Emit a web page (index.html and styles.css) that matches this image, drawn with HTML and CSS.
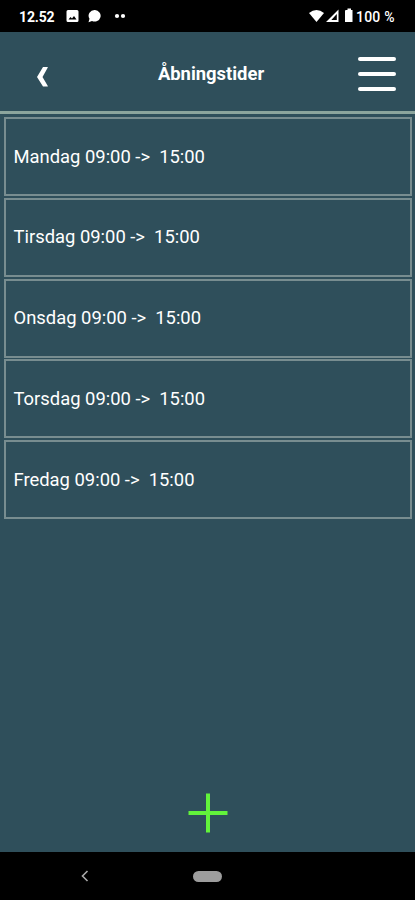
FILE: index.html
```html
<!DOCTYPE html>
<html lang="da">
<head>
<meta charset="utf-8">
<title>Åbningstider</title>
<link rel="stylesheet" href="styles.css">
</head>
<body>
<div class="status">
  <span class="clock">12.52</span>
  <svg class="status-left" width="64" height="16" viewBox="0 0 64 16">
    <path fill="#fff" fill-rule="evenodd" d="M2 2h9q1.500 0 1.500 1.500v9q0 1.500-1.500 1.500h-9q-1.500 0-1.500-1.500v-9q0-1.500 1.500-1.500zM2.500 11.500h8l-2.500-3.500-2 2.500-1.500-1.500z"/>
    <path fill="#fff" d="M29 2a6 5.800 0 1 1-3 11l-3.500 1.300 1-3.500a6 5.800 0 0 1 5.500-8.800z"/>
    <circle cx="51" cy="8" r="2.100" fill="#fff"/><circle cx="57" cy="8" r="2.100" fill="#fff"/>
  </svg>
  <svg class="status-right" width="46" height="16" viewBox="0 0 46 16">
    <path fill="#fff" d="M1 5q7.500-6 15 0l-7.500 9z"/>
    <path fill="#fff" fill-rule="evenodd" d="M30.500 1.500v12.500h-12.500zM28.800 6v6h-5.500z"/>
    <path fill="#fff" d="M38 2h1.500v-1.500h3.500v1.500h1.500v12h-7.500v-11q0-1 1-1z"/>
  </svg>
  <span class="battery">100 %</span>
</div>
<header class="header">
  <svg class="back" width="12" height="20" viewBox="0 0 12 20"><path fill="#fff" d="M7 0h4.500q.5 0 .3.500l-5.300 9.500 5.300 9q.2.500-.3.500h-4.500l-6-9.500z"/></svg>
  <h1>Åbningstider</h1>
  <div class="menu"><i></i><i></i><i></i></div>
</header>
<main class="main">
  <ul class="days">
    <li>Mandag 09:00 -&gt;  15:00</li>
    <li>Tirsdag 09:00 -&gt;  15:00</li>
    <li>Onsdag 09:00 -&gt;  15:00</li>
    <li>Torsdag 09:00 -&gt;  15:00</li>
    <li>Fredag 09:00 -&gt;  15:00</li>
  </ul>
  <svg class="add" width="40" height="40" viewBox="0 0 40 40"><path stroke="#62f33b" stroke-width="4" d="M20 0.500v39M0.500 20h39"/></svg>
</main>
<nav class="nav">
  <svg class="nav-back" width="8" height="12" viewBox="0 0 8 12"><path fill="none" stroke="#aaa" stroke-width="1.600" d="M6.500 1l-5 5 5 5"/></svg>
  <div class="pill"></div>
</nav>
</body>
</html>
```
FILE: styles.css
```css
* { box-sizing: border-box; }
body {
  margin: 0;
  height: 900px;
  display: flex;
  flex-direction: column;
  overflow: hidden;
  background: #2f4f5b;
  color: #fff;
  font-family: Roboto, sans-serif;
}
.status {
  height: 32px;
  padding: 0 20px 0 19px;
  background: #000;
  display: flex;
  align-items: center;
  font-size: 14px;
  font-weight: 700;
}
.clock { width: 47px; letter-spacing: -0.15px; padding-top: 2px; }
.status-right { margin-left: auto; }
.battery { width: 39px; margin-left: 2px; padding-top: 2px; font-weight: 500; letter-spacing: 0.2px; white-space: nowrap; }
.header {
  height: 82px;
  padding: 0 19px 0 36px;
  border-bottom: 3px solid #8ca59d;
  display: grid;
  grid-template-columns: 50px 1fr 38px;
  align-items: center;
}
.back { margin-top: 10px; }
.header h1 {
  margin: 4px 0 0;
  padding-right: 22px;
  text-align: center;
  font-size: 18.4px;
  line-height: 24px;
  font-weight: 700;
}
.menu { display: flex; flex-direction: column; gap: 11px; padding-top: 4px; }
.menu i { height: 4px; border-radius: 2px; background: #fff; }
.main {
  flex: 1;
  display: flex;
  flex-direction: column;
  align-items: center;
}
.days {
  align-self: stretch;
  list-style: none;
  margin: 3px 3px 0 4px;
  padding: 0;
  display: flex;
  flex-direction: column;
  gap: 1.75px;
}
.days li {
  height: 79px;
  padding: 0 0 1px 7.5px;
  border: 2px solid #788d90;
  display: flex;
  align-items: center;
  font-size: 18.4px;
  white-space: pre;
}
.add { margin-top: auto; margin-bottom: 19px; }
.nav {
  height: 48px;
  background: #000;
  display: grid;
  grid-template-columns: 81px 112px 1fr;
  align-items: center;
}
.nav-back { grid-column: 2; }
.pill { width: 29px; height: 11px; border-radius: 6px; background: #9d9d9d; }
```
